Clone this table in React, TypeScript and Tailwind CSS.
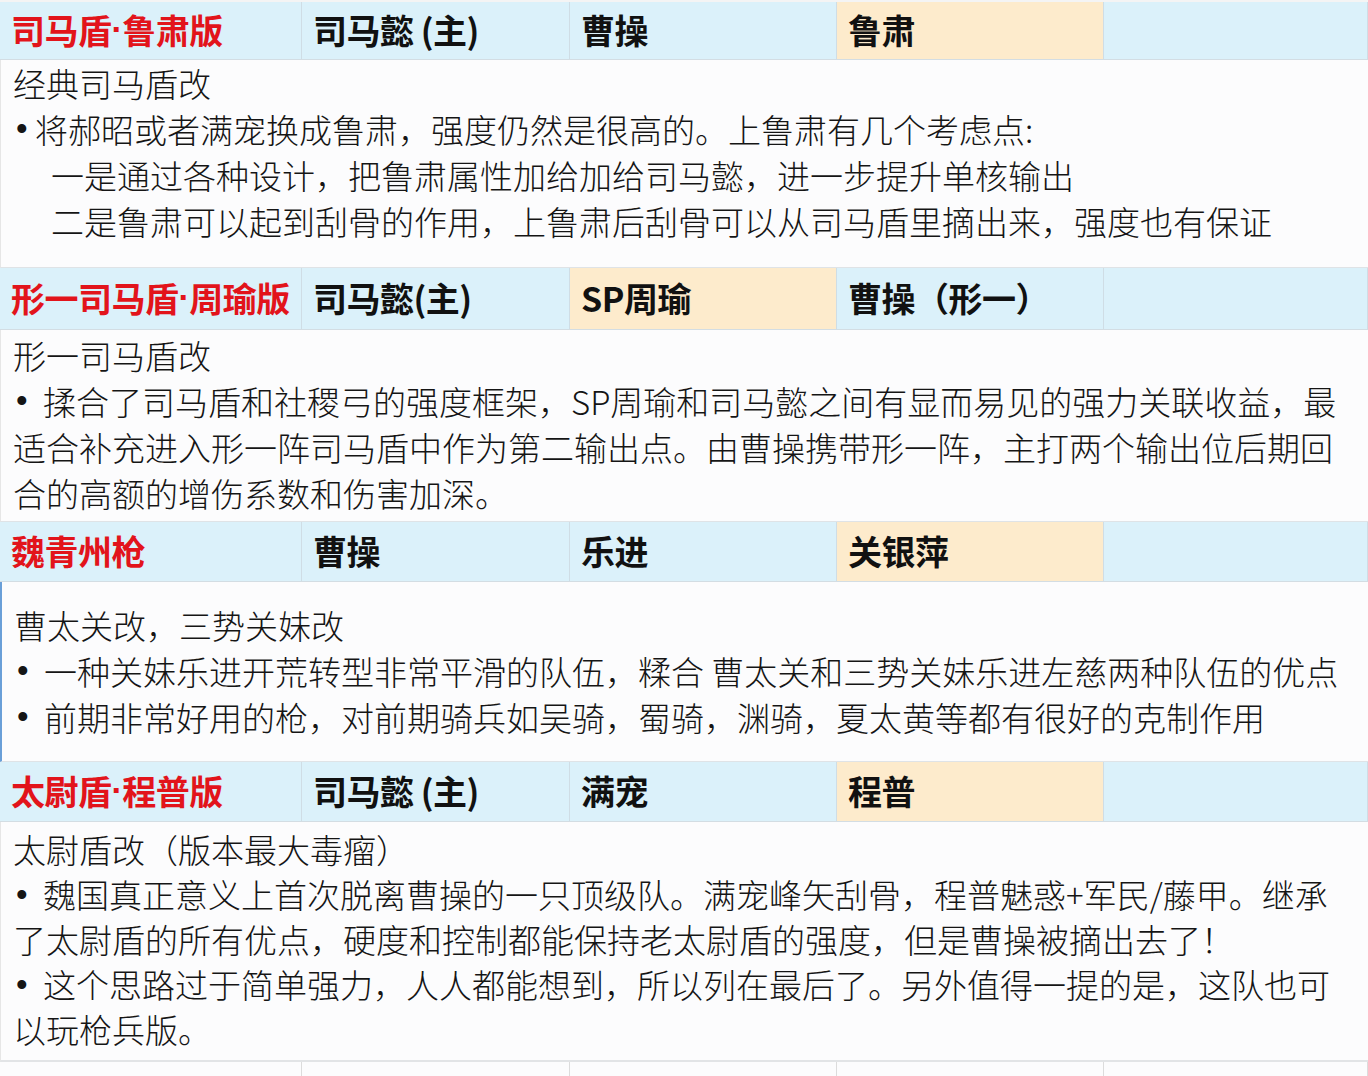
import React from "react";

type Cell = { text: React.ReactNode; orange?: boolean; red?: boolean };

const widths = ["w-[302px]", "w-[268px]", "w-[267px]", "w-[267px]", "flex-1"];

const Dot = () => (
  <span className="font-bold" style={{ fontFamily: '"Liberation Sans", sans-serif' }}>
    ·
  </span>
);

function HeaderRow({ cells, h }: { cells: Cell[]; h: string }) {
  return (
    <div className={`flex ${h} border-b border-[#d3dde3]`}>
      {cells.map((c, i) => (
        <div
          key={i}
          className={`${widths[i]} flex items-center pl-[11px] pb-[3px] border-r border-[#cfdde5] ${
            c.orange ? "bg-[#fdebcc]" : "bg-[#dbf1fa]"
          } ${c.red ? "text-[#e2141b]" : "text-[#111111]"} text-[34px] font-bold whitespace-nowrap tracking-[-0.5px]`}
        >
          {c.text}
        </div>
      ))}
    </div>
  );
}

function BLine({ w, children }: { w: string; children: React.ReactNode }) {
  return (
    <div className="flex">
      <span
        className={`${w} shrink-0 pl-[3px]`}
        style={{ fontFamily: '"Liberation Sans", sans-serif' }}
      >
        •
      </span>
      <span>{children}</span>
    </div>
  );
}

export default function App() {
  const font = { fontFamily: '"Noto Sans CJK SC", "Noto Sans", sans-serif' };
  return (
    <div className="w-[1368px] h-[1076px] overflow-hidden bg-[#fcfcfd]" style={font}>
      <div className="h-[2px] bg-[#f4f4f4]" />
      <HeaderRow
        h="h-[58px]"
        cells={[
          { text: <>司马盾<Dot />鲁肃版</>, red: true },
          { text: "司马懿 (主)" },
          { text: "曹操" },
          { text: "鲁肃", orange: true },
          { text: "" },
        ]}
      />
      <div className="h-[208px] pl-3 text-[33px] leading-[46px] font-light text-[#151515] whitespace-nowrap border-b border-[#dfe3e6] border-l border-l-[#e6e6e6]">
        <div>经典司马盾改</div>
        <BLine w="w-[22px]">将郝昭或者满宠换成鲁肃，强度仍然是很高的。上鲁肃有几个考虑点:</BLine>
        <div className="pl-[38px]">一是通过各种设计，把鲁肃属性加给加给司马懿，进一步提升单核输出</div>
        <div className="pl-[38px]">二是鲁肃可以起到刮骨的作用，上鲁肃后刮骨可以从司马盾里摘出来，强度也有保证</div>
      </div>
      <HeaderRow
        h="h-[62px]"
        cells={[
          { text: <>形一司马盾<Dot />周瑜版</>, red: true },
          { text: "司马懿(主)" },
          { text: "SP周瑜", orange: true },
          { text: "曹操（形一）" },
          { text: "" },
        ]}
      />
      <div className="h-[192px] pt-[2px] pl-3 text-[33px] leading-[46px] font-light text-[#151515] whitespace-nowrap border-b border-[#dfe3e6] border-l border-l-[#e6e6e6]">
        <div>形一司马盾改</div>
        <BLine w="w-[30px]">揉合了司马盾和社稷弓的强度框架，SP周瑜和司马懿之间有显而易见的强力关联收益，最</BLine>
        <div>适合补充进入形一阵司马盾中作为第二输出点。由曹操携带形一阵，主打两个输出位后期回</div>
        <div>合的高额的增伤系数和伤害加深。</div>
      </div>
      <HeaderRow
        h="h-[60px]"
        cells={[
          { text: "魏青州枪", red: true },
          { text: "曹操" },
          { text: "乐进" },
          { text: "关银萍", orange: true },
          { text: "" },
        ]}
      />
      <div className="h-[180px] pt-[20px] pl-3 text-[33px] leading-[46px] font-light text-[#151515] whitespace-nowrap border-b border-[#dfe3e6] border-l-2 border-l-[#6a9fd8]">
        <div>曹太关改，三势关妹改</div>
        <BLine w="w-[30px]">一种关妹乐进开荒转型非常平滑的队伍，糅合 曹太关和三势关妹乐进左慈两种队伍的优点</BLine>
        <BLine w="w-[30px]">前期非常好用的枪，对前期骑兵如吴骑，蜀骑，渊骑，夏太黄等都有很好的克制作用</BLine>
      </div>
      <HeaderRow
        h="h-[60px]"
        cells={[
          { text: <>太尉盾<Dot />程普版</>, red: true },
          { text: "司马懿 (主)" },
          { text: "满宠" },
          { text: "程普", orange: true },
          { text: "" },
        ]}
      />
      <div className="h-[240px] pt-[5px] pl-3 text-[33px] leading-[45px] font-light text-[#151515] whitespace-nowrap border-b-2 border-[#e2e4e6] border-l border-l-[#e6e6e6]">
        <div>太尉盾改（版本最大毒瘤）</div>
        <BLine w="w-[30px]">魏国真正意义上首次脱离曹操的一只顶级队。满宠峰矢刮骨，程普魅惑+军民/藤甲。继承</BLine>
        <div>了太尉盾的所有优点，硬度和控制都能保持老太尉盾的强度，但是曹操被摘出去了！</div>
        <BLine w="w-[30px]">这个思路过于简单强力，人人都能想到，所以列在最后了。另外值得一提的是，这队也可</BLine>
        <div>以玩枪兵版。</div>
      </div>
      <div className="flex h-[20px] bg-[#fcfcfd]">
        {widths.map((w, i) => (
          <div key={i} className={`${w} border-r border-[#dcdcdc]`} />
        ))}
      </div>
    </div>
  );
}
